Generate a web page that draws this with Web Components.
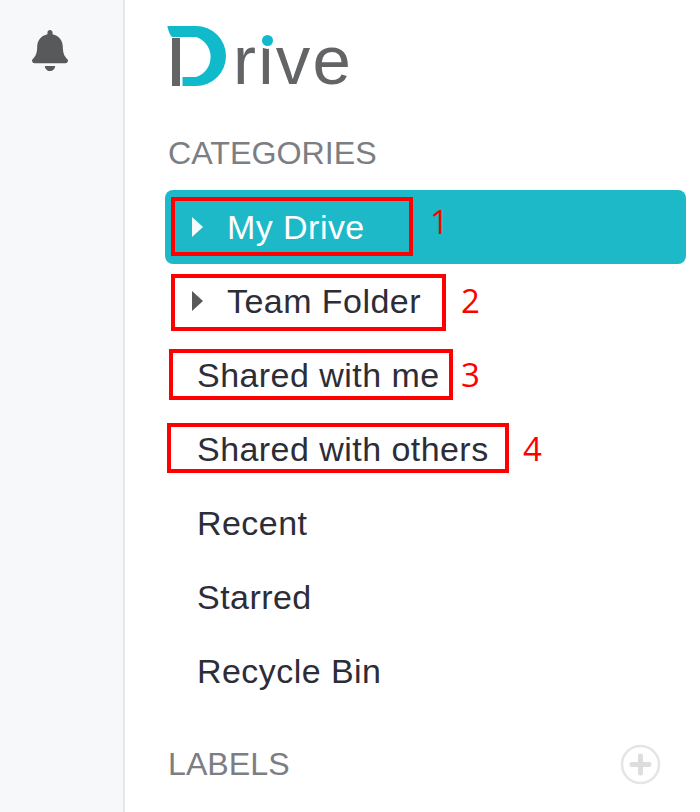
<!DOCTYPE html>
<html>
<head>
<meta charset="utf-8">
<style>
    html, body { margin: 0; height: 100%; background: #fff; overflow: hidden; }
    body { font-family: "Liberation Sans", Arial, sans-serif; }
</style>
</head>
<body>
<drive-page>
    <side-rail slot="rail"></side-rail>
    <drive-logo></drive-logo>
    <section-title>CATEGORIES</section-title>
    <nav-row active arrow>My Drive</nav-row>
    <nav-row arrow>Team Folder</nav-row>
    <nav-row>Shared with me</nav-row>
    <nav-row>Shared with others</nav-row>
    <nav-row>Recent</nav-row>
    <nav-row>Starred</nav-row>
    <nav-row>Recycle Bin</nav-row>
    <section-title add>LABELS</section-title>
</drive-page>

<call-out x="171" y="197" w="242" h="59" n="1" nx="430" ny="202"></call-out>
<call-out x="171" y="274" w="275" h="57" n="2" nx="461" ny="281"></call-out>
<call-out x="169" y="349" w="284" h="51" n="3" nx="461" ny="355"></call-out>
<call-out x="167" y="423" w="342" h="50" n="4" nx="523" ny="429"></call-out>

<script>
class DrivePage extends HTMLElement {
    constructor() {
        super();
        this.shadow = this.attachShadow({ mode: 'open' });
        this.shadow.innerHTML = `
        <style>
            :host { display: flex; width: 700px; height: 812px; overflow: hidden; }
            .rail { flex: none; }
            .main { flex: 1; box-sizing: border-box; padding: 0 14px 0 40px; min-width: 0; }
        </style>
        <div class="rail"><slot name="rail"></slot></div>
        <div class="main"><slot></slot></div>
        `;
    }
}

class SideRail extends HTMLElement {
    constructor() {
        super();
        this.shadow = this.attachShadow({ mode: 'open' });
        this.shadow.innerHTML = `
        <style>
            :host { display: block; box-sizing: border-box; width: 125px; height: 812px; background: #f6f8fa; border-right: 2px solid #e6e7e8; padding: 30px 0 0 32px; }
            svg { display: block; width: 36px; height: 41px; fill: #58595b; }
        </style>
        <svg viewBox="0 0 448 512"><path d="M224 512c35.32 0 63.97-28.65 63.97-64H160.03c0 35.35 28.65 64 63.97 64zm215.39-149.71c-19.32-20.76-55.47-51.99-55.47-154.29 0-77.7-54.48-139.9-127.94-155.16V32c0-17.67-14.32-32-31.98-32s-31.98 14.33-31.98 32v20.84C118.56 68.1 64.08 130.3 64.08 208c0 102.3-36.15 133.53-55.47 154.29-6 6.45-8.66 14.16-8.61 21.71.11 16.4 12.98 32 32.1 32h383.8c19.12 0 32-15.6 32.1-32 .05-7.55-2.61-15.27-8.61-21.71z"/></svg>
        `;
    }
}

class DriveLogo extends HTMLElement {
    constructor() {
        super();
        this.shadow = this.attachShadow({ mode: 'open' });
        this.shadow.innerHTML = `
        <style>
            :host { display: flex; align-items: flex-end; height: 60px; margin: 26px 0 0 2px; position: relative; }
            svg { display: block; width: 60px; height: 60px; flex: none; }
            .word { font-size: 69px; line-height: 60px; height: 60px; color: #636466; margin-left: 6px; letter-spacing: 2.2px; position: relative; top: 5px; }
            /* teal dot sits on the i, the ring hides the grey one underneath */
            .dot { position: absolute; left: 94.5px; top: 9.2px; width: 11px; height: 11px; border-radius: 50%; background: #10bacb; box-shadow: 0 0 0 3px #fff; }
        </style>
        <svg viewBox="167 26 60 60">
            <rect x="172" y="38" width="8" height="48" fill="#636466"/>
            <path fill="#10bacb" d="M167.3 26H196A30 30 0 0 1 196 86H182.5V77H196A21 21 0 0 0 196 37H172Q169 34 167.3 26Z"/>
        </svg>
        <span class="word">rive</span>
        <span class="dot"></span>
        `;
    }
}

class SectionTitle extends HTMLElement {
    constructor() {
        super();
        this.shadow = this.attachShadow({ mode: 'open' });
        this.shadow.innerHTML = `
        <style>
            :host { display: flex; align-items: center; justify-content: space-between; height: 44px; margin-left: 3px; font-size: 32.2px; color: #7b7e82; }
            :host([add]) { margin-top: 34px; padding-right: 25px; }
            :host(:not([add])) { margin-top: 45px; margin-bottom: 15px; }
            svg { display: block; width: 41px; height: 41px; fill: none; stroke: #e4e5e6; }
        </style>
        <span><slot></slot></span>
        ${this.hasAttribute('add') ? `<svg viewBox="0 0 41 41"><circle cx="20.5" cy="20.5" r="18.5" stroke-width="2.6"/><path d="M20.5 12v17M12 20.5h17" stroke-width="5" stroke-linecap="round" stroke="#dcdddf"/></svg>` : ''}
        `;
    }
}

class NavRow extends HTMLElement {
    constructor() {
        super();
        this.shadow = this.attachShadow({ mode: 'open' });
        this.shadow.innerHTML = `
        <style>
            :host { display: flex; align-items: center; height: 74px; box-sizing: border-box; padding-left: 32px; border-radius: 8px; font-size: 34px; letter-spacing: 0.45px; color: #2d2d38; }
            :host([active]) { background: #1eb9c8; color: #fff; }
            :host([arrow]) { padding-left: 27px; }
            .arrow { width: 0; height: 0; border-style: solid; border-width: 10px 0 10px 11px; border-color: transparent transparent transparent #58595b; margin-right: 24px; }
            :host([active]) .arrow { border-left-color: #f4fbfc; }
        </style>
        ${this.hasAttribute('arrow') ? '<span class="arrow"></span>' : ''}
        <span><slot></slot></span>
        `;
    }
}

// red annotation boxes lying over the screenshot
class CallOut extends HTMLElement {
    constructor() {
        super();
        this.shadow = this.attachShadow({ mode: 'open' });
        let a = name => this.getAttribute(name);
        this.shadow.innerHTML = `
        <style>
            :host { display: block; position: absolute; left: 0; top: 0; }
            .box { position: absolute; box-sizing: border-box; border: 4px solid #ff0000; }
            .num { position: absolute; font-family: "Open Sans", sans-serif; font-size: 33px; line-height: 40px; color: #ff0000; }
        </style>
        <div class="box" style="left:${a('x')}px;top:${a('y')}px;width:${a('w')}px;height:${a('h')}px"></div>
        <div class="num" style="left:${a('nx')}px;top:${a('ny')}px">${a('n')}</div>
        `;
    }
}

customElements.define('drive-page', DrivePage);
customElements.define('side-rail', SideRail);
customElements.define('drive-logo', DriveLogo);
customElements.define('section-title', SectionTitle);
customElements.define('nav-row', NavRow);
customElements.define('call-out', CallOut);
</script>
</body>
</html>
